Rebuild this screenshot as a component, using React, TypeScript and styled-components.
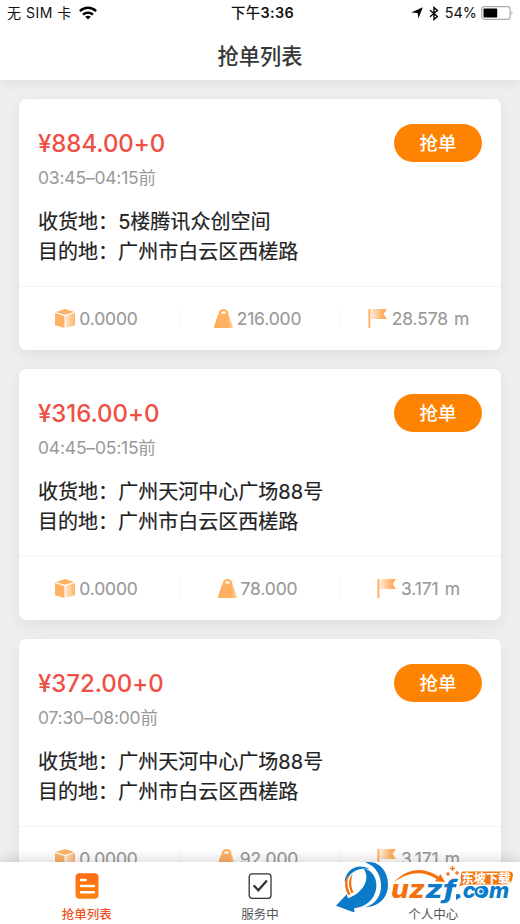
import React from 'react';
import styled, { createGlobalStyle } from 'styled-components';

const Global = createGlobalStyle`
  * { box-sizing: border-box; }
  body { margin: 0; background: #efefef; font-family: Inter, "Noto Sans CJK SC", sans-serif; }
`;

const Screen = styled.div`
  width: 520px;
  height: 924px;
  display: flex;
  flex-direction: column;
  overflow: hidden;
  background: #efefef;
`;

const Header = styled.header`
  flex: none;
  position: relative;
  z-index: 2;
  height: 80px;
  background: #fff;
  box-shadow: 0 5px 12px -1px rgba(0, 0, 0, 0.06);
`;

const StatusBar = styled.div`
  height: 27px;
  padding: 0 6px 0 7px;
  display: grid;
  grid-template-columns: 1fr auto 1fr;
  align-items: center;
  color: #111;
  font-size: 14px;
  line-height: 26px;
`;

const Carrier = styled.div`
  display: flex;
  align-items: center;
  gap: 7px;
  letter-spacing: 0.5px;
  white-space: pre;
  svg { margin-top: -2px; }
  span { margin-top: -1px; }
`;

const Clock = styled.div`
  margin-top: -1px;
  font-weight: 600;
  font-size: 14.4px;
  letter-spacing: 0.35px;
  padding-left: 4px;
  span { font-weight: 500; }
`;

const Indicators = styled.div`
  display: flex;
  align-items: center;
  justify-content: flex-end;
  > svg { margin-top: -1px; }
`;

const BluetoothSlot = styled.span`
  display: flex;
  margin: -1px 0 0 6px;
`;

const Percent = styled.span`
  margin: -1px 4px 0 6px;
  font-size: 14.4px;
`;

const Title = styled.h1`
  margin: 0;
  height: 53px;
  padding-top: 3px;
  text-align: center;
  color: #383838;
  font-size: 21.2px;
  line-height: 53px;
  font-weight: 500;
`;

const List = styled.main`
  flex: 1;
  min-height: 0;
  overflow: hidden;
  padding: 19px 19px 0;
  display: flex;
  flex-direction: column;
  gap: 19px;
`;

const Card = styled.article`
  flex: none;
  height: 251px;
  width: 482px;
  border-radius: 7px;
  background: #fff;
  box-shadow: 0 5px 16px rgba(0, 0, 0, 0.07);
`;

const Summary = styled.div`
  height: 188px;
  padding: 25px 19px 0;
  border-bottom: 1px solid #f5f5f5;
`;

const PriceRow = styled.div`
  height: 38px;
  display: flex;
  align-items: center;
  justify-content: space-between;
`;

const Price = styled.div`
  padding-top: 2px;
  color: #ee5045;
  font-size: 24px;
  line-height: 38px;
  font-weight: 500;
  letter-spacing: -0.05px;
`;

const GrabButton = styled.button`
  width: 88px;
  height: 38px;
  padding: 0 0 2px;
  border: 0;
  border-radius: 19px;
  background: #ff8303;
  color: #fff;
  font: 500 18.5px/36px "Noto Sans CJK SC", sans-serif;
`;

const Period = styled.div`
  height: 30px;
  padding-top: 1px;
  color: #999;
  font-size: 17.5px;
  line-height: 30px;
  letter-spacing: -0.2px;
`;

const Addresses = styled.div`
  padding-top: 15px;
`;

const Address = styled.div`
  color: #222;
  font-size: 20.05px;
  line-height: 30px;
  white-space: nowrap;
  -webkit-text-stroke: 0.18px #222;
`;

const Stats = styled.div`
  height: 63px;
  display: grid;
  grid-template-columns: 160px 161px 161px;
  align-items: center;
`;

const Stat = styled.div`
  height: 19px;
  padding-right: 5px;
  display: flex;
  align-items: center;
  justify-content: center;
  gap: 4px;
  color: #999;
  font-size: 17.5px;
  line-height: 21px;
  letter-spacing: -0.15px;
  word-spacing: 1.5px;
  white-space: pre;
  -webkit-text-stroke: 0.15px #999;
  & + & { border-left: 1px solid #f4f4f4; }
  svg { flex: none; }
`;

const TabBar = styled.nav`
  flex: none;
  position: relative;
  z-index: 2;
  height: 62px;
  display: grid;
  grid-template-columns: repeat(3, 1fr);
  background: #fff;
  box-shadow: 0 -2px 12px rgba(0, 0, 0, 0.16);
`;

const Tab = styled.div<{ $active?: boolean }>`
  display: flex;
  flex-direction: column;
  align-items: center;
  padding-top: 11px;
  color: ${p => (p.$active ? '#f4511e' : '#555')};
  font: ${p => (p.$active ? 500 : 400)} 12.5px/20px "Noto Sans CJK SC", sans-serif;
`;

const TabIcon = styled.span`
  height: 31px;
  svg { display: block; }
`;

const Watermark = styled.svg`
  position: absolute;
  left: 333px;
  top: -4px;
`;

const Wifi = () => (
  <svg width="18" height="14" viewBox="0 0 18 14">
    <g fill="none" stroke="#000" strokeWidth="2.5">
      <path d="M.9 5.2C5.5.7 12.5.7 17.1 5.2" />
      <path d="M4 8.7c2.9-2.7 7.1-2.7 10 0" />
    </g>
    <path d="M9 13.4 6.2 10.8c1.6-1.3 4-1.3 5.6 0z" />
  </svg>
);

const LocationArrow = () => (
  <svg width="12" height="12" viewBox="0 0 12 12"><path d="M11.8.3 7.4 11.5 6.7 5.9.3 5.5z" /></svg>
);

const Bluetooth = () => (
  <svg width="10" height="15" viewBox="0 0 10 15">
    <path d="M1 4.2 8.4 10.4 5 13.5V1.5l3.4 3.1L1 10.8" fill="none" stroke="#000" strokeWidth="1.4" />
  </svg>
);

const Battery = () => (
  <svg width="33" height="14" viewBox="0 0 33 14">
    <rect x=".7" y=".7" width="28.4" height="12.6" rx="2.6" fill="#fff" stroke="#aaa" strokeWidth="1.2" />
    <rect x="2.5" y="2.4" width="13.7" height="9.2" rx=".8" />
    <path d="M30.6 4.8q1.8 2.2 0 4.4z" fill="#999" />
  </svg>
);

const BoxIcon = () => (
  <svg width="20" height="19" viewBox="0 0 20 19">
    <defs>
      <linearGradient id="boxSide"><stop offset="0" stopColor="#ffe8d1" /><stop offset="1" stopColor="#ffb366" /></linearGradient>
    </defs>
    <path d="M10 0 19.3 3 10 5.8.7 3z" fill="#ffb163" />
    <path d="M0 4 9.5 6.9V19L0 16.3z" fill="#ffb368" />
    <path d="M10.5 6.9 20 4v12.3L10.5 19z" fill="url(#boxSide)" />
  </svg>
);

const WeightIcon = () => (
  <svg width="19" height="19" viewBox="0 0 19 19">
    <path d="M4 6h11l3.8 12q.1 1-.9 1H1.1q-1 0-.9-1z" fill="#ffc78f" />
    <path d="M5.5 5.5 3.2 19H1.1q-1 0-.9-1L4 6z" fill="#ffa94f" />
    <path d="M5 6h9l1.8 13H3.4z" fill="#ffb163" />
    <path d="M4.6 7V4.6a4.9 4.6 0 0 1 9.8 0V7z" fill="#ffb163" />
    <path d="M7.1 4.6a2.4 2.3 0 0 1 4.8 0z" fill="#fff" />
  </svg>
);

const FlagIcon = () => (
  <svg width="20" height="19" viewBox="0 0 20 19">
    <defs>
      <linearGradient id="flagCloth"><stop offset="0" stopColor="#fff0e2" /><stop offset=".75" stopColor="#ffad5a" /></linearGradient>
    </defs>
    <path d="M2.4 0H19l-3.4 5L19 10H2.4z" fill="url(#flagCloth)" />
    <path d="M.4 0h2v19h-2z" fill="#ffb267" />
  </svg>
);

const ListIcon = () => (
  <svg width="24" height="26" viewBox="0 0 24 26">
    <defs>
      <linearGradient id="listFill" x1="0" y1="0" x2="0" y2="1"><stop offset="0" stopColor="#ff6a16" /><stop offset="1" stopColor="#ff840f" /></linearGradient>
    </defs>
    <rect x=".5" y=".3" width="23" height="25.4" rx="4" fill="url(#listFill)" />
    <path d="M6 7h4.6M6 13h13M6 19.2h13" stroke="#fff" strokeWidth="2.4" strokeLinecap="round" />
  </svg>
);

const CheckIcon = () => (
  <svg width="24" height="26" viewBox="0 0 24 26">
    <rect x="1.2" y=".9" width="21.8" height="24.4" rx="3" fill="none" stroke="#333" strokeWidth="1.3" />
    <path d="m6.3 13 4 4.3 8-9" fill="none" stroke="#333" strokeWidth="2.3" strokeLinecap="round" />
  </svg>
);

const SiteLogo = () => (
  <Watermark width="185" height="54" viewBox="333 858 185 54">
    <g transform="translate(330 855) scale(.3333)">
      <path d="M44 82C46 45 82 22 118 42 92 36 66 48 56 66z" fill="#0b7bc9" />
      <path d="M100 40C147 50 150 110 118 140 106 151 90 158 72 160L74 173 18 152 50 118 54 130C92 118 126 76 100 40z" fill="#0b7bc9" />
      <path d="M106 22C148 14 174 50 174 88 174 130 146 156 104 157 138 148 156 118 153 86 150 56 136 34 106 22z" fill="#0b7bc9" />
      <path d="M55 121C42 98 42 74 56 60 50 80 52 102 62 117z" fill="#f3700d" />
      <path d="M65 115C54 94 54 72 68 56 62 76 62 96 71 112z" fill="#f3700d" />
      <path d="M191 82C232 38 282 34 326 65L331 57 345 81 315 79 320 72C280 45 236 50 191 82z" fill="#f3700d" />
    </g>
    <g fontFamily="Inter, sans-serif" fontWeight="800" fontStyle="italic">
      <text x="391" y="898.3" fontSize="25" fill="#f3700d" textLength="34" lengthAdjust="spacingAndGlyphs">uz</text>
      <text x="425" y="898.3" fontSize="25" fill="#0b7bc9" textLength="31" lengthAdjust="spacingAndGlyphs">zf</text>
      <text x="455" y="898.3" fontSize="22" fill="#0b7bc9" textLength="54" lengthAdjust="spacingAndGlyphs">.com</text>
    </g>
    <circle cx="480" cy="891.8" r="5.5" fill="#0b7bc9" />
    <circle cx="480.5" cy="891.5" r="3.2" fill="#fff" />
    <circle cx="481" cy="891.5" r="2" fill="#0b7bc9" />
    <path d="m456 894 5 3-5 3z" fill="#0b7bc9" />
    <path d="M452.5 866v5m-2.5-2.5h5M448 872v4m-2-2h4M457 871v4m-2-2h4" stroke="#f37a1d" strokeWidth="1.4" />
    <path d="M463 871.5h46q4 0 4 4l-1 4q-1 5-6 5h-42l-5 2 2-5q-1-10 2-10z" fill="#f3780f" />
    <text x="461.5" y="882.5" fill="#fff" stroke="#fff" strokeWidth=".2" fontFamily="Noto Sans CJK SC, sans-serif" fontSize="12.2" fontWeight="700" textLength="49">东坡下载</text>
  </Watermark>
);

interface Order {
  price: string;
  period: string;
  from: string;
  volume: string;
  weight: string;
  distance: string;
}

const orders: Order[] = [
  { price: '884.00', period: '03:45–04:15前', from: '5楼腾讯众创空间', volume: '0.0000', weight: '216.000', distance: '28.578 m' },
  { price: '316.00', period: '04:45–05:15前', from: '广州天河中心广场88号', volume: '0.0000', weight: '78.000', distance: '3.171 m' },
  { price: '372.00', period: '07:30–08:00前', from: '广州天河中心广场88号', volume: '0.0000', weight: '92.000', distance: '3.171 m' },
];

const OrderCard = ({ order }: { order: Order }) => (
  <Card>
    <Summary>
      <PriceRow>
        <Price>¥{order.price}+0</Price>
        <GrabButton>抢单</GrabButton>
      </PriceRow>
      <Period>{order.period}</Period>
      <Addresses>
        <Address>收货地：{order.from}</Address>
        <Address>目的地：广州市白云区西槎路</Address>
      </Addresses>
    </Summary>
    <Stats>
      <Stat><BoxIcon /><span>{order.volume}</span></Stat>
      <Stat><WeightIcon /><span>{order.weight}</span></Stat>
      <Stat><FlagIcon /><span>{order.distance}</span></Stat>
    </Stats>
  </Card>
);

export default function App() {
  return (
    <Screen>
      <Global />
      <Header>
        <StatusBar>
          <Carrier><span>无 SIM 卡</span><Wifi /></Carrier>
          <Clock><span>下午</span>3:36</Clock>
          <Indicators>
            <LocationArrow />
            <BluetoothSlot><Bluetooth /></BluetoothSlot>
            <Percent>54%</Percent>
            <Battery />
          </Indicators>
        </StatusBar>
        <Title>抢单列表</Title>
      </Header>
      <List>
        {orders.map(o => <OrderCard key={o.period} order={o} />)}
      </List>
      <TabBar>
        <Tab $active><TabIcon><ListIcon /></TabIcon>抢单列表</Tab>
        <Tab><TabIcon><CheckIcon /></TabIcon>服务中</Tab>
        <Tab><TabIcon />个人中心</Tab>
        <SiteLogo />
      </TabBar>
    </Screen>
  );
}
